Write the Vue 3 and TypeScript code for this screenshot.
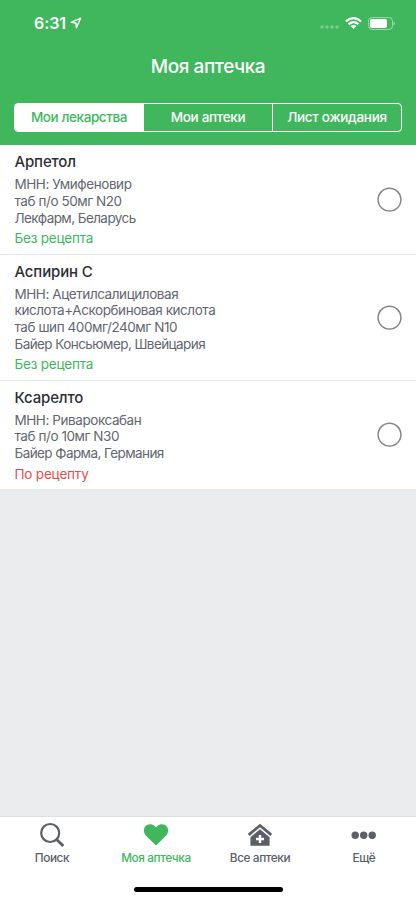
<script setup lang="ts">
import { ref } from 'vue'

interface Medicine {
  name: string
  className: string
  details: string[]
  maker: string
  prescription: boolean
}

const segments = ['Мои лекарства', 'Мои аптеки', 'Лист ожидания']
const activeSegment = ref(0)

const medicines: Medicine[] = [
  {
    name: 'Арпетол',
    className: 'arpetol',
    details: ['МНН: Умифеновир', 'таб п/о 50мг N20'],
    maker: 'Лекфарм, Беларусь',
    prescription: false,
  },
  {
    name: 'Аспирин С',
    className: 'aspirin',
    details: [
      'МНН: Ацетилсалициловая',
      'кислота+Аскорбиновая кислота',
      'таб шип 400мг/240мг N10',
    ],
    maker: 'Байер Консьюмер, Швейцария',
    prescription: false,
  },
  {
    name: 'Ксарелто',
    className: 'xarelto',
    details: ['МНН: Ривароксабан', 'таб п/о 10мг N30'],
    maker: 'Байер Фарма, Германия',
    prescription: true,
  },
]
</script>

<template>
  <div class="screen">
    <header class="header">
      <div class="status">
        <div class="clock">
          <span class="time">6:31</span>
          <svg class="location" viewBox="0 0 12 12" width="12" height="12">
            <path d="M1.200 5.400 10.600 1.200 6.400 10.800 5.900 6Z" fill="none" stroke="#fff" stroke-width="1.400" stroke-linejoin="round" />
          </svg>
        </div>
        <div class="indicators">
          <svg class="signal" viewBox="0 0 19 4" width="19" height="4">
            <g fill="#fff" opacity=".3">
              <circle cx="2" cy="2" r="1.800" /><circle cx="7" cy="2" r="1.800" />
              <circle cx="12" cy="2" r="1.800" /><circle cx="17" cy="2" r="1.800" />
            </g>
          </svg>
          <svg class="wifi" viewBox="0 0 17 12" width="17" height="12">
            <g fill="none" stroke="#fff" stroke-width="2.300">
              <path d="M.9 4.500Q8.500-2.200 16.100 4.500" />
              <path d="M3.600 7.300Q8.500 3 13.400 7.300" />
            </g>
            <path d="M5.500 9.100Q8.500 6.700 11.500 9.100L8.500 12Z" fill="#fff" />
          </svg>
          <svg class="battery" viewBox="0 0 27 13" width="27" height="13">
            <rect x=".5" y=".5" width="24" height="12" rx="3.500" fill="none" stroke="#fff" stroke-opacity=".45" />
            <rect x="2" y="2" width="17" height="9" rx="1.800" fill="#fff" />
            <path d="M25.500 4.500Q26.800 5 26.800 6.500T25.500 8.500Z" fill="#fff" opacity=".5" />
          </svg>
        </div>
      </div>
      <h1 class="title">Моя аптечка</h1>
      <div class="segments">
        <button
          v-for="(label, i) in segments"
          :key="label"
          class="segment"
          :class="{ active: i === activeSegment }"
          @click="activeSegment = i"
        >{{ label }}</button>
      </div>
    </header>

    <main class="list">
      <article v-for="m in medicines" :key="m.name" class="item" :class="m.className">
        <div class="info">
          <h2 class="name">{{ m.name }}</h2>
          <p v-for="line in m.details" :key="line" class="line">{{ line }}</p>
          <p class="line maker">{{ m.maker }}</p>
          <p class="recipe" :class="{ required: m.prescription }">
            {{ m.prescription ? 'По рецепту' : 'Без рецепта' }}
          </p>
        </div>
        <svg class="radio" viewBox="0 0 25 25" width="25" height="25">
          <circle cx="12.500" cy="12.700" r="11.400" fill="none" stroke="#85878b" stroke-width="1.500" />
        </svg>
      </article>
    </main>

    <footer class="footer">
      <nav class="tabs">
        <a class="tab">
          <svg viewBox="0 0 26 26" width="26" height="26">
            <circle cx="11.200" cy="11" r="9" fill="none" stroke="#5a5f68" stroke-width="2.200" />
            <path d="M17.600 17.400 24.300 24" stroke="#5a5f68" stroke-width="2.800" />
          </svg>
          <span>Поиск</span>
        </a>
        <a class="tab selected">
          <svg viewBox="0 0 26 26" width="26" height="26">
            <path d="M13 23.500 3 13.700C-1.500 9 1.500 2.200 7 2.200C9.800 2.200 12 3.500 13 5.500C14 3.500 16.200 2.200 19 2.200C24.500 2.200 27.500 9 23 13.700Z" fill="#40b75d" />
          </svg>
          <span>Моя аптечка</span>
        </a>
        <a class="tab">
          <svg viewBox="0 0 26 26" width="26" height="26">
            <path d="M1.700 12.900 13 3.400 24.300 12.900" fill="none" stroke="#5a5f68" stroke-width="2.700" />
            <path d="M13 7.200 22.600 15.200V23.700H3.400V15.200Z" fill="#5a5f68" />
            <path d="M13 13V21M9 17H17" stroke="#fff" stroke-width="2.400" />
          </svg>
          <span>Все аптеки</span>
        </a>
        <a class="tab">
          <svg viewBox="0 0 26 26" width="26" height="26">
            <g fill="#5a5f68">
              <circle cx="4.200" cy="13.300" r="3.700" /><circle cx="12.700" cy="13.300" r="3.700" /><circle cx="21.200" cy="13.300" r="3.700" />
            </g>
          </svg>
          <span>Ещё</span>
        </a>
      </nav>
      <div class="home-bar"></div>
    </footer>
  </div>
</template>

<style>
body {
  margin: 0;
}
</style>

<style scoped>
.screen {
  display: flex;
  flex-direction: column;
  width: 416px;
  height: 900px;
  overflow: hidden;
  background: #ebecee;
  font-family: Inter, "Liberation Sans", sans-serif;
}
.header {
  box-sizing: border-box;
  height: 145px;
  background: #40b75d;
  color: #fff;
}
.status {
  display: flex;
  justify-content: space-between;
  align-items: center;
  height: 46px;
  padding: 0 21px 0 34px;
}
.clock {
  display: flex;
  align-items: center;
  gap: 4px;
}
.time {
  font-size: 16px;
  font-weight: 600;
  letter-spacing: -0.1px;
}
.indicators {
  display: flex;
  align-items: center;
}
.signal {
  margin: 8px 6px 0 0;
}
.wifi {
  margin-right: 6px;
}
.title {
  margin: 0;
  height: 40px;
  line-height: 41px;
  text-align: center;
  font-size: 19px;
  font-weight: 500;
  letter-spacing: -0.45px;
}
.segments {
  display: grid;
  grid-template-columns: 128px 129px 129px;
  box-sizing: border-box;
  width: 388px;
  height: 29px;
  margin: 17px 14px 0;
  border: 1px solid #fff;
  border-radius: 4px;
  overflow: hidden;
}
.segment {
  border: 0;
  border-left: 1px solid #fff;
  padding: 0 0 1px;
  background: none;
  color: #fff;
  font: 500 13.5px Inter, "Liberation Sans", sans-serif;
  letter-spacing: -0.3px;
}
.segment.active {
  background: #fff;
  color: #40b75d;
  letter-spacing: -0.4px;
}
.segment:first-child {
  border-left: 0;
}
.item {
  display: flex;
  align-items: center;
  justify-content: space-between;
  box-sizing: border-box;
  padding: 0 14px 0 14.5px;
  border-bottom: 1px solid #e6e7e9;
  background: #fff;
}
.item.arpetol,
.item.xarelto {
  height: 109.5px;
}
.item.aspirin {
  height: 126px;
}
.info {
  padding-top: 1px;
}
.name {
  margin: 0 0 4px;
  line-height: 20px;
  font-size: 15px;
  font-weight: 500;
  color: #2c2f34;
  letter-spacing: -0.15px;
}
.line {
  margin: 0;
  line-height: 16.67px;
  font-size: 13.5px;
  color: #62666f;
  letter-spacing: -0.43px;
}
.line.maker {
  letter-spacing: -0.57px;
}
.recipe {
  margin: 3px 0 0;
  line-height: 18px;
  font-size: 13.5px;
  color: #40b75d;
  letter-spacing: -0.2px;
}
.recipe.required {
  color: #e04f4f;
}
.radio {
  flex: none;
}
.footer {
  box-sizing: border-box;
  height: 84px;
  margin-top: auto;
  border-top: 1px solid #dedfe1;
  background: #fff;
}
.tabs {
  display: grid;
  grid-template-columns: repeat(4, 1fr);
  height: 72px;
}
.tab {
  display: flex;
  flex-direction: column;
  align-items: center;
  padding-top: 5px;
  color: #5a5f68;
  font-size: 11.8px;
  font-weight: 500;
  line-height: 16px;
  letter-spacing: -0.4px;
}
.tab span {
  margin-top: 2px;
}
.tab.selected {
  color: #40b75d;
}
.home-bar {
  width: 149px;
  height: 5px;
  margin: -2px auto 0;
  border-radius: 3px;
  background: #000;
}
</style>
